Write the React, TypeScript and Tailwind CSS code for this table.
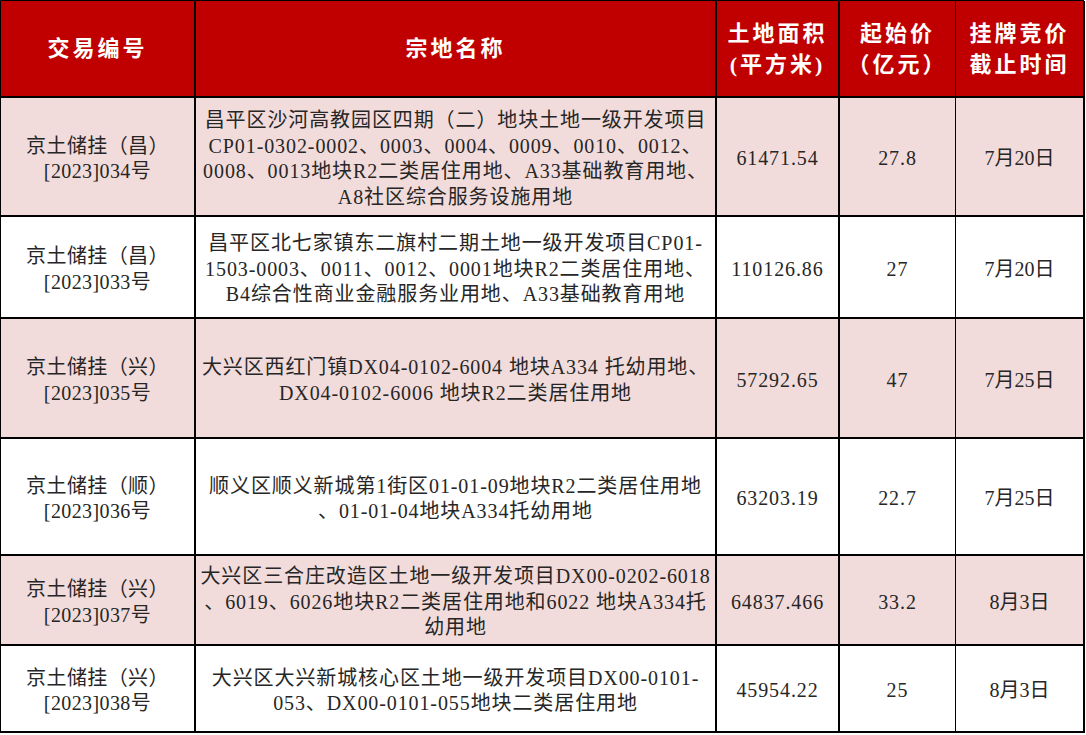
import React from 'react';

type Row = {
  code: string[];
  name: string[];
  area: string;
  price: string;
  date: string;
  h: string;
  pink: boolean;
};

const rows: Row[] = [
  {
    code: ['京土储挂（昌）', '[2023]034号'],
    name: [
      '昌平区沙河高教园区四期（二）地块土地一级开发项目',
      'CP01-0302-0002、0003、0004、0009、0010、0012、',
      '0008、0013地块R2二类居住用地、A33基础教育用地、',
      'A8社区综合服务设施用地',
    ],
    area: '61471.54',
    price: '27.8',
    date: '7月20日',
    h: 'h-[119px]',
    pink: true,
  },
  {
    code: ['京土储挂（昌）', '[2023]033号'],
    name: [
      '昌平区北七家镇东二旗村二期土地一级开发项目CP01-',
      '1503-0003、0011、0012、0001地块R2二类居住用地、',
      'B4综合性商业金融服务业用地、A33基础教育用地',
    ],
    area: '110126.86',
    price: '27',
    date: '7月20日',
    h: 'h-[102px]',
    pink: false,
  },
  {
    code: ['京土储挂（兴）', '[2023]035号'],
    name: ['大兴区西红门镇DX04-0102-6004 地块A334 托幼用地、', 'DX04-0102-6006 地块R2二类居住用地'],
    area: '57292.65',
    price: '47',
    date: '7月25日',
    h: 'h-[120px]',
    pink: true,
  },
  {
    code: ['京土储挂（顺）', '[2023]036号'],
    name: ['顺义区顺义新城第1街区01-01-09地块R2二类居住用地', '、01-01-04地块A334托幼用地'],
    area: '63203.19',
    price: '22.7',
    date: '7月25日',
    h: 'h-[117px]',
    pink: false,
  },
  {
    code: ['京土储挂（兴）', '[2023]037号'],
    name: [
      '大兴区三合庄改造区土地一级开发项目DX00-0202-6018',
      '、6019、6026地块R2二类居住用地和6022 地块A334托',
      '幼用地',
    ],
    area: '64837.466',
    price: '33.2',
    date: '8月3日',
    h: 'h-[90px]',
    pink: true,
  },
  {
    code: ['京土储挂（兴）', '[2023]038号'],
    name: ['大兴区大兴新城核心区土地一级开发项目DX00-0101-', '053、DX00-0101-055地块二类居住用地'],
    area: '45954.22',
    price: '25',
    date: '8月3日',
    h: 'h-[87px]',
    pink: false,
  },
];

const cols = 'grid grid-cols-[195px_521px_123px_116px_129px]';

function Lines({ lines }: { lines: string[] }) {
  return (
    <div className="text-center">
      {lines.map((l, i) => (
        <div key={i} className="whitespace-nowrap">
          {l}
        </div>
      ))}
    </div>
  );
}

export default function App() {
  return (
    <div className="w-[1086px] h-[735px] bg-white overflow-hidden font-['Liberation_Serif','Noto_Sans_CJK_SC',serif]">
      <div className="w-[1084px] border-t border-l border-black">
        {/* header */}
        <div className={`${cols} h-[97px] bg-[#c00000] text-white text-[22px] leading-[31px] font-bold tracking-[3px]`}>
          <div className="flex items-center justify-center border-b-2 border-r-2 border-black">交易编号</div>
          <div className="flex items-center justify-center border-b-2 border-r-2 border-black">宗地名称</div>
          <div className="flex items-center justify-center border-b-2 border-r-2 border-black text-center">
            土地面积<br />(平方米)
          </div>
          <div className="flex items-center justify-center border-b-2 border-r border-black text-center">
            起始价<br />（亿元）
          </div>
          <div className="flex items-center justify-center border-b-2 border-r-2 border-black text-center">
            挂牌竞价<br />截止时间
          </div>
        </div>

        {rows.map((r, i) => (
          <div
            key={i}
            className={`${cols} ${r.h} ${r.pink ? 'bg-[#f2dcdb]' : 'bg-white'} text-[#262626] text-[20px] leading-[25.5px]`}
          >
            <div className="flex items-center justify-center pt-[5px] border-b-2 border-r-2 border-black tracking-[0.4px]">
              <Lines lines={r.code} />
            </div>
            <div className="flex items-center justify-center pt-[5px] border-b-2 border-r-2 border-black tracking-[0.9px]">
              <Lines lines={r.name} />
            </div>
            <div className="flex items-center justify-center pt-[5px] border-b-2 border-r-2 border-black tracking-[0.9px]">{r.area}</div>
            <div className="flex items-center justify-center pt-[5px] border-b-2 border-r border-black tracking-[0.9px]">{r.price}</div>
            <div className="flex items-center justify-center pt-[5px] border-b-2 border-r-2 border-black">{r.date}</div>
          </div>
        ))}
      </div>
    </div>
  );
}
